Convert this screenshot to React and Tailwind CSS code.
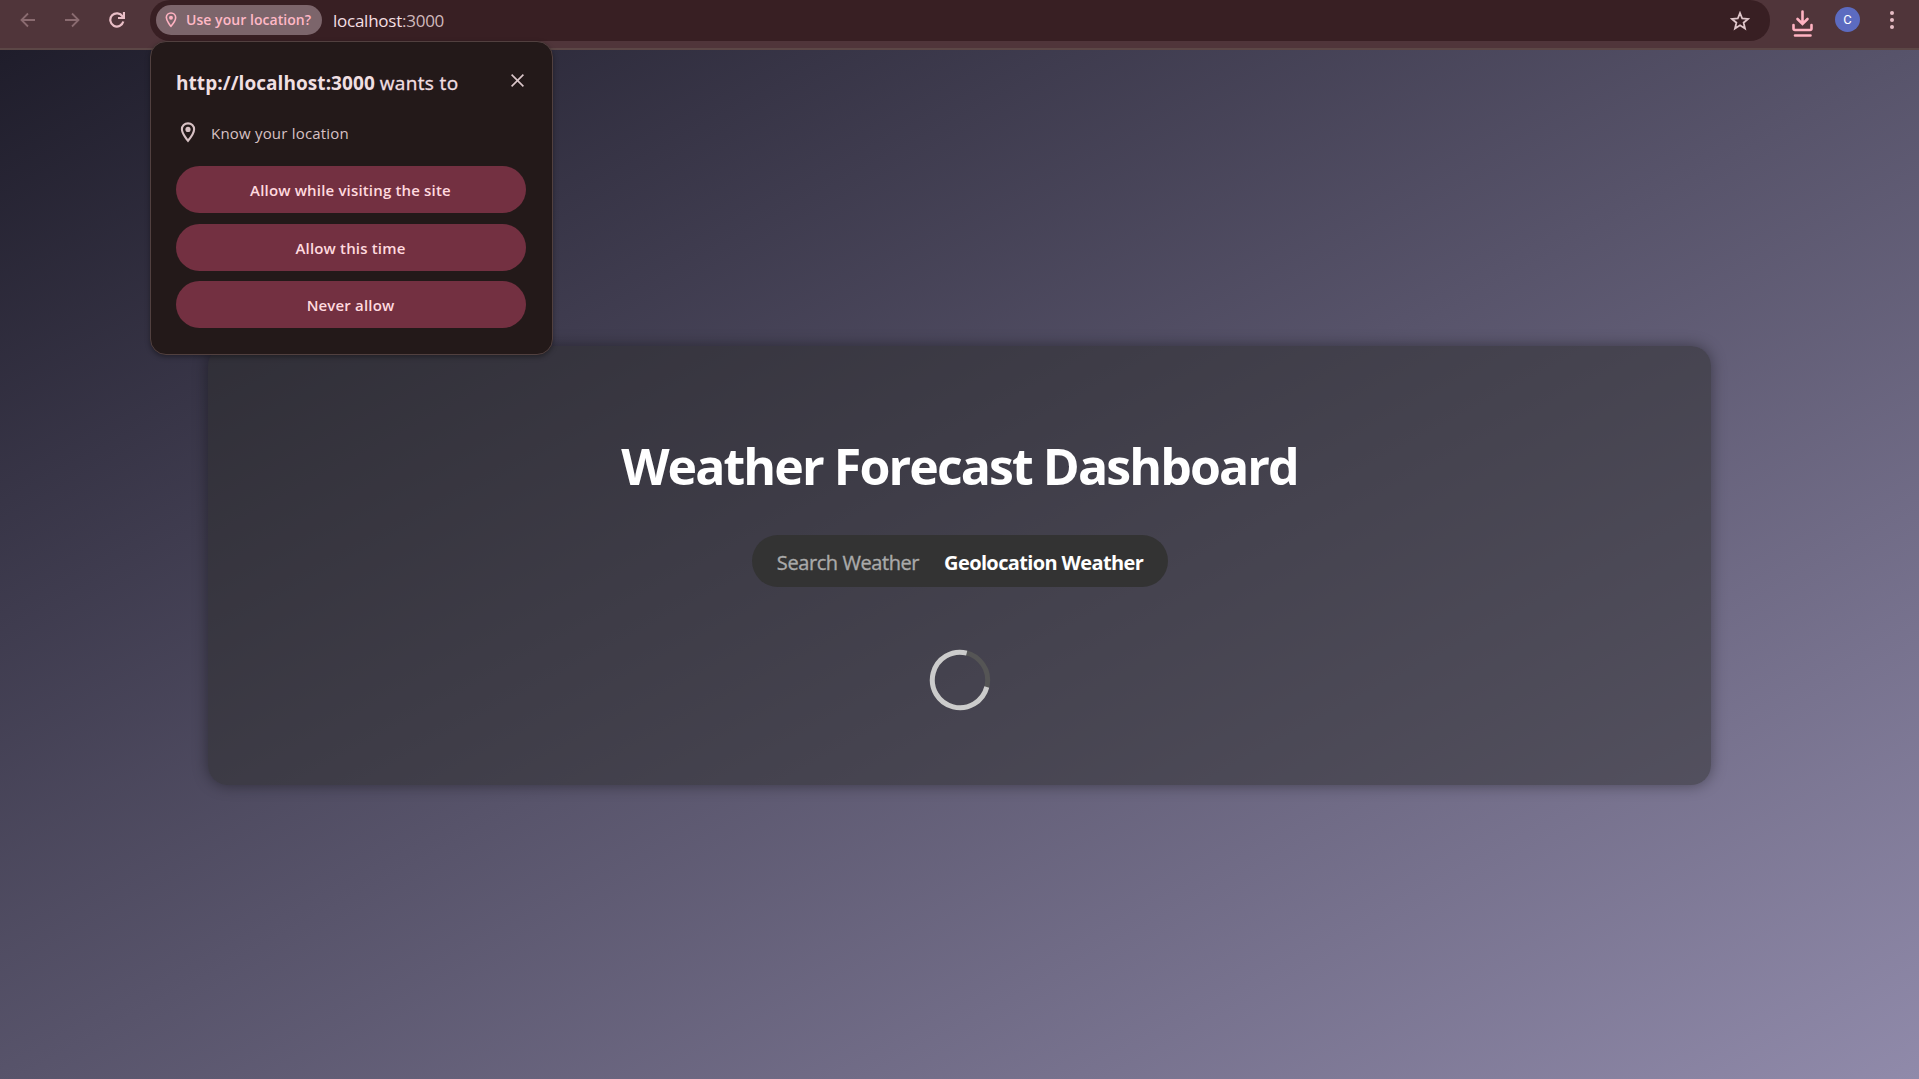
import React from "react";

const Pin = ({ className, color }) => (
  <svg className={className} viewBox="0 0 16 22" fill="none">
    <path d="M8 1.4c-3.6 0-6.4 2.8-6.4 6.3 0 4.5 6.4 12 6.4 12s6.4-7.500 6.400-12C14.400 4.200 11.600 1.400 8 1.400Z" stroke={color} strokeWidth="2.200" />
    <circle cx="8" cy="7.800" r="2.700" fill={color} />
  </svg>
);

function Toolbar() {
  return (
    <header className="flex h-[50px] w-full border-b-2 border-[#5c4746] bg-[#50353a]">
      <div className="flex h-[39px] w-[150px] shrink-0 items-center pl-5">
        <svg className="h-4 w-4" viewBox="0 0 16 16" fill="none" stroke="#8a6b70" strokeWidth="1.800">
          <path d="M15 8H1.800M8 1.500 1.500 8 8 14.500" />
        </svg>
        <svg className="ml-[28px] h-4 w-4" viewBox="0 0 16 16" fill="none" stroke="#8a6b70" strokeWidth="1.800">
          <path d="M1 8h13.200M8 1.500 14.500 8 8 14.500" />
        </svg>
        <svg className="ml-[29px] h-4 w-4" viewBox="0 0 16 16" fill="none" stroke="#eabfc7" strokeWidth="2.200">
          <path d="M14.300 9.500A6.600 6.600 0 1 1 13.500 4.400L14 5.200M9 6h6V0" />
        </svg>
      </div>
      <div className="flex h-[41px] w-[1620px] shrink-0 items-center rounded-[20px] bg-[#381f23] pl-[6px] pr-5">
        <div className="mb-px flex h-[30px] w-[166px] items-center rounded-full bg-[#7c656b] pl-[9px]">
          <Pin className="h-4 w-3" color="#ffb2c1" />
          <span className="mb-px ml-[9px] whitespace-nowrap font-['Open_Sans',sans-serif] text-[14px] font-semibold tracking-[0.05px] text-[#ffb8c6]">Use your location?</span>
        </div>
        <span className="ml-[11px] whitespace-nowrap font-['Open_Sans',sans-serif] text-[17px] tracking-[-0.25px] text-[#f4dfe2]">
          localhost<span className="text-[#d0b9bc]">:3000</span>
        </span>
        <svg className="ml-auto h-5 w-5" viewBox="0 0 20 20" fill="none" stroke="#dfc6ca" strokeWidth="1.800">
          <path d="m10 2 2.200 5.500 5.900.4-4.500 3.800 1.400 5.800L10 14.300l-5 3.200 1.400-5.800L1.900 7.900l5.900-.4Z" />
        </svg>
      </div>
      <div className="flex h-[39px] flex-1 items-center">
        <svg className="ml-[22px] mt-[8px] h-[27px] w-[21px]" viewBox="0 0 21 27" fill="none" stroke="#ffb2c1" strokeWidth="2.600" strokeLinecap="round">
          <path d="M10.500 1.500v12M5.500 9l5 5 5-5M1.500 15v3.500q0 1.500 1.500 1.500h15q1.500 0 1.500-1.500V15M3 25.500h15.500" />
        </svg>
        <div className="ml-[22px] flex h-[25px] w-[25px] items-center justify-center rounded-full bg-[#5c6bc0] font-[Roboto,sans-serif] text-[13px] text-white">C</div>
        <svg className="ml-[30px] h-5 w-1" viewBox="0 0 4 20" fill="#e6bcc4">
          <circle cx="2" cy="3" r="2" />
          <circle cx="2" cy="10" r="2" />
          <circle cx="2" cy="17" r="2" />
        </svg>
      </div>
    </header>
  );
}

const choices = ["Allow while visiting the site", "Allow this time", "Never allow"];

function PermissionPrompt() {
  return (
    <section className="absolute left-[150px] top-[41px] h-[314px] w-[403px] rounded-[16px] border border-[#51403f] bg-[#231919] pl-[25px] pr-[26px] font-['Open_Sans',sans-serif] shadow-[0_2px_5px_rgba(0,0,0,0.35)]">
      <div className="flex h-[82px] items-center justify-between">
        <h2 className="whitespace-nowrap text-[19px] font-semibold text-[#f0dfe1]">
          <b className="font-bold tracking-[0.06px]">http://localhost:3000</b> <span className="font-medium tracking-[0.35px] [-webkit-text-stroke:0.35px_#f0dfe1]">wants to</span>
        </h2>
        <svg className="mr-[2px] mt-[-5px] h-[13px] w-[13px]" viewBox="0 0 13 13" stroke="#dac6c9" strokeWidth="1.600">
          <path d="m.6.6 11.800 11.800M12.400.6.600 12.400" />
        </svg>
      </div>
      <div className="flex h-[42px] items-start pl-[4px]">
        <Pin className="mt-[-2px] h-[21px] w-4" color="#d7c1c4" />
        <span className="ml-[15px] mt-[-2px] text-[15px] tracking-[0.2px] text-[#d7c1c4]">Know your location</span>
      </div>
      <div className="flex flex-col gap-[10.500px]">
        {choices.map((label) => (
          <button key={label} className="h-[47px] rounded-full bg-[#733041] pr-px pt-[2px] text-[15px] font-semibold tracking-[0.17px] text-[#ffd9df]">{label}</button>
        ))}
      </div>
    </section>
  );
}

export default function App() {
  return (
    <div className="relative flex h-[1079px] w-[1919px] flex-col overflow-hidden">
      <Toolbar />
      <main className="flex w-full flex-1 flex-col items-center bg-[linear-gradient(to_bottom_right,#1f1d2b,#908aaa)] pt-[296px] font-['Open_Sans',sans-serif]">
        <div className="flex h-[439px] w-[1503px] flex-col items-center rounded-[20px] bg-[rgba(44,44,44,0.5)] shadow-[0_0_15px_rgba(0,0,0,0.4)]">
          <h1 className="mt-[84px] whitespace-nowrap text-[50px] font-bold leading-[72px] tracking-[-1.9px] text-white">Weather Forecast Dashboard</h1>
          <nav className="mt-[33px] flex h-[52px] w-[416px] items-center justify-center gap-[25px] rounded-[26px] bg-[#333] pl-px pt-[3px] text-[20px]">
            <span className="whitespace-nowrap font-medium tracking-[-0.42px] text-[#aaa] [-webkit-text-stroke:0.35px_#aaa]">Search Weather</span>
            <span className="whitespace-nowrap font-bold tracking-[-0.63px] text-white">Geolocation Weather</span>
          </nav>
          <svg className="mt-[62px] h-[62px] w-[62px]" viewBox="0 0 62 62" fill="none" strokeWidth="5">
            <circle cx="31" cy="31" r="27.700" stroke="#555" />
            <path d="M37.700 4.100A27.700 27.700 0 1 0 57.800 38" stroke="#ccc" />
          </svg>
        </div>
      </main>
      <PermissionPrompt />
    </div>
  );
}
